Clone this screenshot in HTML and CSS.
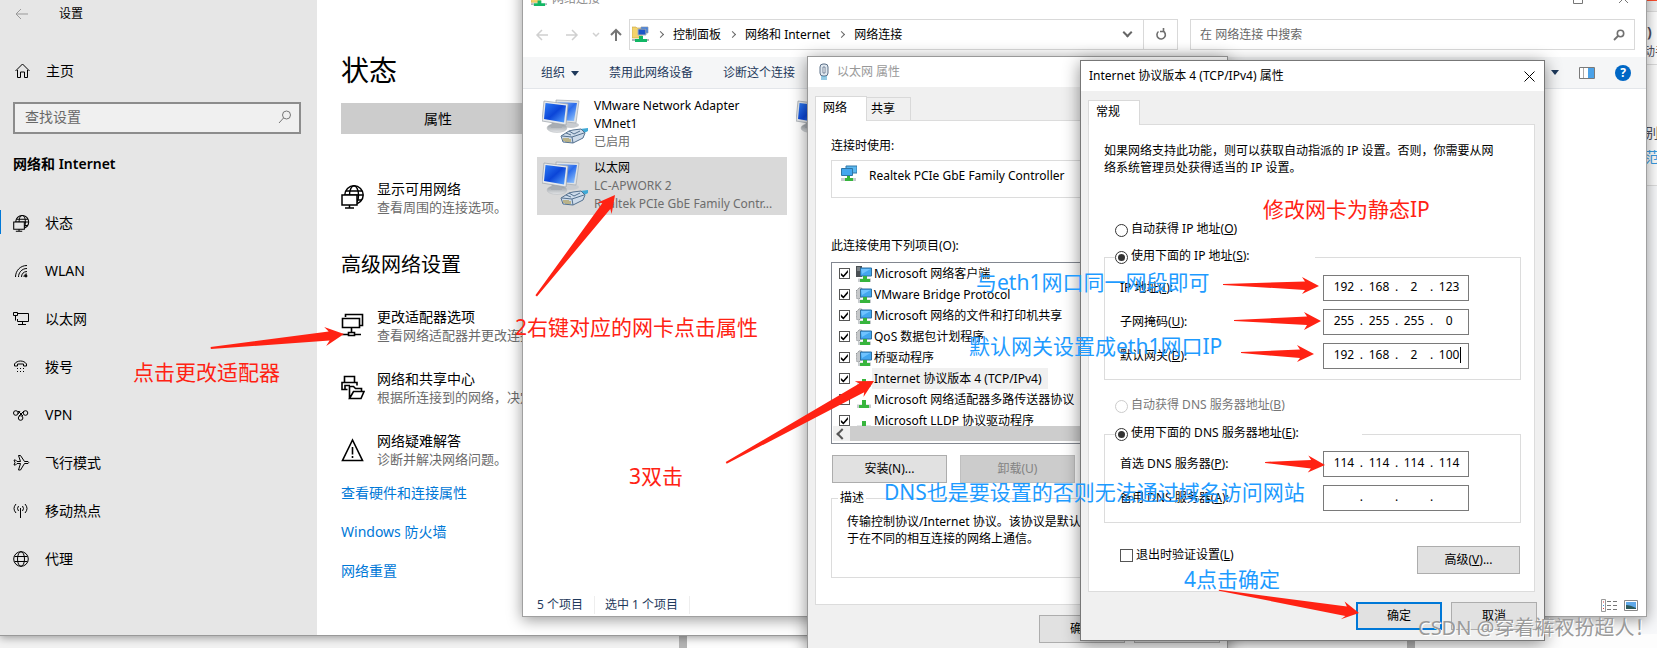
FILE: index.html
```html
<!DOCTYPE html>
<html lang="zh-CN">
<head>
<meta charset="utf-8">
<title>网络连接</title>
<link rel="stylesheet" href="styles.css">
</head>
<body>
<svg class="defs" aria-hidden="true">
  <defs>
    <linearGradient id="screen" x1="0" y1="0" x2="1" y2="1"><stop offset="0" stop-color="#2f7df5"/><stop offset=".5" stop-color="#0b45d8"/><stop offset="1" stop-color="#5aa6ff"/></linearGradient>
    <linearGradient id="screen2" x1="0" y1="0" x2="1" y2="1"><stop offset="0" stop-color="#9cc4fb"/><stop offset=".5" stop-color="#2c6cea"/><stop offset="1" stop-color="#9fd0ff"/></linearGradient>
    <linearGradient id="stand" x1="0" y1="0" x2="0" y2="1"><stop offset="0" stop-color="#8e949b"/><stop offset="1" stop-color="#e4e6e8"/></linearGradient>
    <symbol id="adapter" viewBox="0 0 46 46">
      <ellipse cx="29" cy="26" rx="8" ry="3" fill="#c9ccd0"/>
      <path d="M14 1l23 1-3 22-20-2z" fill="#dfe3e6" stroke="#a2a8ae" stroke-width=".7"/>
      <path d="M16 3l19 1-3 18-16-1z" fill="url(#screen2)"/>
      <ellipse cx="15" cy="29" rx="10" ry="4.500" fill="url(#stand)" stroke="#b5b8bc" stroke-width=".5"/>
      <path d="M10 22h9l1 7h-11z" fill="#a8adb3"/>
      <path d="M2 2l24 3-2 21L0 22z" fill="#e6e9ec" stroke="#9aa1a8" stroke-width=".7"/>
      <path d="M3.500 4l20.500 2.500-2 17L2 20z" fill="url(#screen)"/>
      <path d="M46 29l-8 1-5 4 4 3 9-5z" fill="#3fa9d6"/>
      <path d="M31 31l8-1 4 4-2 5-10 5-10-1-2-6 8-5z" fill="#cddbea" stroke="#54718f" stroke-width="1"/>
      <path d="M20 37l10 1 1 6M30 38l12-4M27 32l5 3 6-3M24 34l5 2" fill="none" stroke="#54718f" stroke-width="1"/>
      <path d="M22 39v3M24 39v4M26 39v4M28 40v3" stroke="#a58a2a" stroke-width="1"/>
    </symbol>
    <symbol id="service" viewBox="0 0 16 16">
      <path d="M0 4l2-2 2-1.500 2 1-1 9-3 2-2-2z" fill="#c6c8ca" stroke="#8d9194" stroke-dasharray="2 1"/>
      <path d="M4.500 2h11v8h-11z" fill="#43a7ef" stroke="#2f6f9f"/>
      <path d="M5 3h9.500L6 8z" fill="#6fc3ff"/>
      <path d="M2 12.500h13V16H2z" fill="#c8cccf"/><path d="M7 10h4v3h3v3H4v-3h3z" fill="#37b53d"/>
    </symbol>
    <symbol id="client" viewBox="0 0 16 16">
      <path d="M0 0h6v11H0z" fill="#4a5054"/><path d="M1 2h3M1 4h3" stroke="#a9b0b4"/>
      <path d="M4.500 2h11v8h-11z" fill="#43a7ef" stroke="#2f6f9f"/>
      <path d="M5 3h9.500L6 8z" fill="#6fc3ff"/>
      <path d="M2 12.500h13V16H2z" fill="#c8cccf"/><path d="M7 10h4v3h3v3H4v-3h3z" fill="#37b53d"/>
    </symbol>
    <symbol id="protocol" viewBox="0 0 16 16">
      <path d="M1 12.500h14V16H1z" fill="#c8cccf"/><path d="M6 8h4v5h3v3H3v-3h3z" fill="#37b53d"/>
    </symbol>
    <symbol id="netfolder" viewBox="0 0 17 17">
      <path d="M0 1h4l1 1h5v10H0z" fill="#f3d36b" stroke="#c7a23e" stroke-width=".6"/>
      <path d="M6 3h8v6H6z" fill="#1d56c8" stroke="#a8b2bd"/><path d="M9 1h7v6h-2V3H9z" fill="#3f80e6" stroke="#8d99a5" stroke-width=".7"/>
      <path d="M7 10h4v3h4v3H3v-3h4z" fill="#12b765"/><path d="M0 13h3v2H0zM15 13h2v2h-2z" fill="#aeb4ba"/>
    </symbol>
    <symbol id="netglobe" viewBox="0 0 24 24">
      <g fill="none" stroke="currentColor" stroke-width="1.500">
        <circle cx="13" cy="10" r="9.200"/><ellipse cx="13" cy="10" rx="4.500" ry="9.200"/><path d="M5 6h16M4 10h18M14 15h7"/>
        <path class="mask" d="M1 10h15v10H1z"/><path d="M8.500 20v3M4 23h9"/>
      </g>
    </symbol>
  </defs>
</svg>
<main class="desktop">
  <aside class="browser-edge">
    <div class="edge-bar"></div>
    <div class="edge-head"><b>)</b><span>动手</span></div>
    <div class="edge-body"><span>别</span><a href="#">范</a></div>
  </aside>
  <div class="taskstrip"><i></i><span></span><i></i></div>

  <section class="window settings">
    <nav class="sidebar">
      <div class="set-title"><svg width="14" height="12" viewBox="0 0 14 12" class="ln dim"><path d="M13 6H1M6 1L1 6l5 5"/></svg><span>设置</span></div>
      <a class="nav home" href="#"><svg width="17" height="16" viewBox="0 0 17 16" class="ln"><path d="M.5 8L7.500 1l7 7M2.500 7v7.500h3V9h4v5.500h3V7"/></svg>主页</a>
      <label class="set-search"><input type="text" placeholder="查找设置" aria-label="查找设置"><svg width="14" height="14" viewBox="0 0 14 14" class="ln mid"><circle cx="8.500" cy="5" r="4"/><path d="M5.500 8L1 13"/></svg></label>
      <h2 class="side-head">网络和 Internet</h2>
      <a class="nav active" href="#"><svg width="17" height="17" viewBox="0 0 24 24"><use href="#netglobe"/></svg>状态</a>
      <a class="nav" href="#"><svg width="17" height="16" viewBox="0 0 17 16" class="ln"><path d="M2.500 14C2.500 8 7 2.500 14 2.500M5.500 14c0-4 3-8.500 8.500-8.500M8.500 14c0-3 2-5.500 5.500-5.500"/><path d="M11 14c0-2 1-3 3-3"/><circle cx="13" cy="13" r="1" fill="#000"/></svg>WLAN</a>
      <a class="nav" href="#"><svg width="17" height="16" viewBox="0 0 17 16" class="ln"><path d="M5 2.500h10.500v8h-11V8M9.500 10.500V13M5 13.500h8M.5 1.500h4v3h-4zM2.500 4.500v5"/></svg>以太网</a>
      <a class="nav" href="#"><svg width="17" height="16" viewBox="0 0 17 16" class="ln"><path d="M1.500 7V5C4 1 11 1 13.500 5v2h-3V5h-6v2z"/><path d="M4 9.500h8M4 12.500h8" stroke-dasharray="1 2"/></svg>拨号</a>
      <a class="nav" href="#"><svg width="17" height="16" viewBox="0 0 17 16" class="ln"><circle cx="2.800" cy="6" r="2.300"/><circle cx="12.500" cy="6" r="2.300"/><circle cx="7.600" cy="11" r="2.300"/><path d="M5 4l5 5M11 4L6 9M5 7l2-3M8 7l3-3"/></svg>VPN</a>
      <a class="nav" href="#"><svg width="17" height="16" viewBox="0 0 17 16" class="ln"><path d="M1 5h1.500l1.500 1.500h3.500L5.500.5h2l4 6H15q1.500 1 0 2h-3.500l-4 6.500h-2l2-6.500H4L2.500 10H1l1-2.500z"/></svg>飞行模式</a>
      <a class="nav" href="#"><svg width="17" height="16" viewBox="0 0 17 16" class="ln"><path d="M7.500 5v10M3 1q-4 4.500 0 9M12 1q4 4.500 0 9M5.500 3q-2 2.500 0 5M9.500 3q2 2.500 0 5"/></svg>移动热点</a>
      <a class="nav" href="#"><svg width="17" height="17" viewBox="0 0 17 17" class="ln"><circle cx="8" cy="8" r="7.300"/><ellipse cx="8" cy="8" rx="3.500" ry="7.300"/><path d="M1.500 5.500h13M1.500 10.500h13"/></svg>代理</a>
    </nav>
    <div class="set-main">
      <h1>状态</h1>
      <button class="prop-btn" type="button">属性</button>
      <a class="opt first" href="#"><svg width="24" height="26" viewBox="0 0 24 26"><use href="#netglobe" width="24" height="24"/></svg><span><b>显示可用网络</b><small>查看周围的连接选项。</small></span></a>
      <h2>高级网络设置</h2>
      <div class="opts">
        <a class="opt" href="#"><svg width="24" height="26" viewBox="0 0 24 26" class="ln big"><path d="M4.500 4V1.500h17v11h-3M1.500 5.500h17v9h-17zM10.500 14.500v5M7.500 19.500h6v3h-6zM1 21.500h6.500M13.500 21.500H20"/></svg><span><b>更改适配器选项</b><small>查看网络适配器并更改连接设置。</small></span></a>
        <a class="opt" href="#"><svg width="24" height="26" viewBox="0 0 24 26" class="ln big"><path d="M3.500 7V1.500h10V7M6.500 14.500H1V7.500h15v3M4 14.500v-4h5"/><path d="M8.500 23.500v-12h4l2 2h6v3M8.500 23.500l4-7h10.500l-3 7z"/></svg><span><b>网络和共享中心</b><small>根据所连接到的网络，决定要共享的内容。</small></span></a>
        <a class="opt" href="#"><svg width="24" height="26" viewBox="0 0 24 26" class="ln big"><path d="M11.500 3L1.500 23.500h20zM11.500 10v7.500M11.500 19v2"/></svg><span><b>网络疑难解答</b><small>诊断并解决网络问题。</small></span></a>
      </div>
      <div class="links"><a href="#">查看硬件和连接属性</a><a href="#">Windows 防火墙</a><a href="#">网络重置</a></div>
    </div>
  </section>

  <section class="window explorer">
    <header class="ex-title"><svg width="16" height="16"><use href="#netfolder"/></svg><span>网络连接</span><svg class="ln mid caps" width="56" height="12" viewBox="0 0 56 12"><path d="M.5 1.500h9v9h-9zM46 1l9 9M55 1l-9 9"/></svg></header>
    <div class="ex-address">
      <svg width="88" height="14" viewBox="0 0 88 14" class="ln arrows"><g stroke="#d0d0d0" stroke-width="1.500"><path d="M13 7H2M7 2L2 7l5 5M31 7h11M37 2l5 5-5 5M58 5l3 3 3-3"/></g><path stroke="#757575" stroke-width="2" d="M81 13V2M76 7l5-5 5 5"/></svg>
      <div class="crumbs"><svg width="17" height="17"><use href="#netfolder"/></svg><i></i><a href="#">控制面板</a><i></i><a href="#">网络和 Internet</a><i></i><a href="#">网络连接</a><i class="down"></i></div>
      <button class="refresh" type="button" aria-label="刷新"><svg width="12" height="13" viewBox="0 0 12 13"><path d="M8 3A4.200 4.200 0 1 1 3.500 3.500M8.500 0v3.500H5" fill="none" stroke="#6d6d6d" stroke-width="1.600"/></svg></button>
      <label class="ex-search"><input type="text" placeholder="在 网络连接 中搜索" aria-label="在 网络连接 中搜索"><svg width="12" height="12" viewBox="0 0 12 12"><circle cx="7.500" cy="4.500" r="3.200" fill="none" stroke="#707070" stroke-width="1.600"/><path d="M5 7L1 11" stroke="#707070" stroke-width="1.800"/></svg></label>
    </div>
    <div class="ex-tools">
      <button type="button">组织<i class="tri"></i></button><button type="button">禁用此网络设备</button><button type="button">诊断这个连接</button>
      <span class="tools-right"><i class="tri"></i><svg width="16" height="12" viewBox="0 0 16 12"><path d="M.5.5h15v11H.5z" fill="#fff" stroke="#7a7a7a"/><path d="M4.500 1v10" stroke="#aaa"/><path d="M9 1h6v10H9z" fill="#4ba2e8"/></svg><button class="help" type="button">?</button></span>
    </div>
    <div class="ex-items">
      <div class="item"><svg width="46" height="46"><use href="#adapter"/></svg><p>VMware Network Adapter VMnet1<br><span>已启用</span></p></div>
      <div class="item third"><svg width="46" height="46"><use href="#adapter"/></svg></div>
      <div class="item selected"><svg width="46" height="46"><use href="#adapter"/></svg><p>以太网<br><span>LC-APWORK 2</span><br><span>Realtek PCIe GbE Family Contr...</span></p></div>
    </div>
    <footer class="ex-status"><span>5 个项目</span><span>选中 1 个项目</span><svg width="38" height="13" viewBox="0 0 38 13"><path d="M.5.500h4v12h-4z" fill="#fff" stroke="#999"/><path d="M2 3h1M2 9.500h1" stroke="#e03a3a"/><path d="M2 6.500h1" stroke="#3a8ee0"/><path d="M6 2.500h4m2 0h4M6 6.500h4m2 0h4M6 10.500h4m2 0h4" stroke="#777"/><path d="M23.500 1.500h13v10h-13z" fill="#fff" stroke="#888"/><path d="M25 3h10v7H25z" fill="#5fa8e8"/><path d="M25 6q4 0 10 3v1H25z" fill="#2c5a5c"/></svg></footer>
  </section>

  <section class="window dialog ethernet">
    <header class="dlg-title muted"><svg width="10" height="18" viewBox="0 0 10 18"><rect x="1" y="1" width="8" height="12" rx="3" fill="#dfe7ee" stroke="#5c7088"/><path d="M4 4h2v6H4z" fill="#fff" stroke="#5c7088" stroke-width=".8"/><path d="M3 13v4M5 13v4M7 13v4" stroke="#2b95c9"/></svg>以太网 属性</header>
    <div class="dlg-body">
      <div class="tabs"><button class="tab on" type="button">网络</button><button class="tab" type="button">共享</button></div>
      <div class="panel">
        <p class="line">连接时使用:</p>
        <div class="device"><svg width="16" height="16" viewBox="0 0 16 16"><path d="M5 1h11v7H5z" fill="#5cb8ef" stroke="#2f76a8"/><path d="M.5 3.500h11v7H.5z" fill="#43a7ef" stroke="#2f76a8"/><path d="M0 13h15v3H0z" fill="#c8cccf"/><path d="M6 11h3v2h3v3H4v-3h2z" fill="#37b53d"/></svg><span>Realtek PCIe GbE Family Controller</span></div>
        <p class="line mid-line">此连接使用下列项目(O):</p>
        <div class="list">
          <div class="rows">
            <label><input type="checkbox" checked><svg width="16" height="16"><use href="#client"/></svg><span>Microsoft 网络客户端</span></label>
            <label><input type="checkbox" checked><svg width="16" height="16"><use href="#service"/></svg><span>VMware Bridge Protocol</span></label>
            <label><input type="checkbox" checked><svg width="16" height="16"><use href="#service"/></svg><span>Microsoft 网络的文件和打印机共享</span></label>
            <label><input type="checkbox" checked><svg width="16" height="16"><use href="#service"/></svg><span>QoS 数据包计划程序</span></label>
            <label><input type="checkbox" checked><svg width="16" height="16"><use href="#service"/></svg><span>桥驱动程序</span></label>
            <label><input type="checkbox" checked><svg width="16" height="16"><use href="#protocol"/></svg><span class="hl">Internet 协议版本 4 (TCP/IPv4)</span></label>
            <label><input type="checkbox"><svg width="16" height="16"><use href="#protocol"/></svg><span>Microsoft 网络适配器多路传送器协议</span></label>
            <label><input type="checkbox" checked><svg width="16" height="16"><use href="#protocol"/></svg><span>Microsoft LLDP 协议驱动程序</span></label>
          </div>
          <div class="hscroll"><button type="button" aria-label="向左滚动"></button><span></span></div>
        </div>
        <div class="btns"><button class="btn" type="button">安装(N)...</button><button class="btn" type="button" disabled>卸载(U)</button><button class="btn" type="button" aria-label="属性"></button></div>
        <fieldset class="desc"><legend>描述</legend><p>传输控制协议/Internet 协议。该协议是默认<br>于在不同的相互连接的网络上通信。</p></fieldset>
      </div>
      <div class="dlg-foot"><button class="btn" type="button">确定</button><button class="btn" type="button" aria-label="取消"></button></div>
    </div>
  </section>

  <section class="window dialog ipv4">
    <header class="dlg-title">Internet 协议版本 4 (TCP/IPv4) 属性<button class="close" type="button" aria-label="关闭"><svg width="11" height="11" viewBox="0 0 11 11" class="ln"><path d="M.5.5l10 10M10.500.5l-10 10"/></svg></button></header>
    <div class="dlg-body">
      <div class="tabs"><button class="tab on" type="button">常规</button></div>
      <div class="panel">
        <p class="intro">如果网络支持此功能，则可以获取自动指派的 IP 设置。否则，你需要从网络系统管理员处获得适当的 IP 设置。</p>
        <label class="radio auto-ip"><input type="radio" name="ip"><span>自动获得 IP 地址(<u>O</u>)</span></label>
        <fieldset class="group"><legend><label class="radio"><input type="radio" name="ip" checked><span>使用下面的 IP 地址(<u>S</u>):</span></label></legend>
          <div class="row"><label for="ip1">IP 地址(<u>I</u>):</label><div class="ip"><input id="ip1" value="192">.<input value="168" aria-label="IP 2">.<input value="2" aria-label="IP 3">.<input value="123" aria-label="IP 4"></div></div>
          <div class="row"><label for="mask1">子网掩码(<u>U</u>):</label><div class="ip"><input id="mask1" value="255">.<input value="255" aria-label="掩码 2">.<input value="255" aria-label="掩码 3">.<input value="0" aria-label="掩码 4"></div></div>
          <div class="row"><label for="gw1">默认网关(<u>D</u>):</label><div class="ip"><input id="gw1" value="192">.<input value="168" aria-label="网关 2">.<input value="2" aria-label="网关 3">.<input class="caret" value="100" aria-label="网关 4"></div></div>
        </fieldset>
        <label class="radio auto-dns"><input type="radio" name="dns" disabled><span>自动获得 DNS 服务器地址(<u>B</u>)</span></label>
        <fieldset class="group dns"><legend><label class="radio"><input type="radio" name="dns" checked><span>使用下面的 DNS 服务器地址(<u>E</u>):</span></label></legend>
          <div class="row"><label for="dns1">首选 DNS 服务器(<u>P</u>):</label><div class="ip"><input id="dns1" value="114">.<input value="114" aria-label="首选 2">.<input value="114" aria-label="首选 3">.<input value="114" aria-label="首选 4"></div></div>
          <div class="row"><label for="alt1">备用 DNS 服务器(<u>A</u>):</label><div class="ip"><input id="alt1" value="">.<input value="" aria-label="备用 2">.<input value="" aria-label="备用 3">.<input value="" aria-label="备用 4"></div></div>
        </fieldset>
        <div class="advanced"><label><input type="checkbox"><span>退出时验证设置(<u>L</u>)</span></label><button class="btn" type="button">高级(<u>V</u>)...</button></div>
      </div>
      <div class="dlg-foot"><button class="btn primary" type="button">确定</button><button class="btn" type="button">取消</button></div>
    </div>
  </section>

  <div class="notes">
    <svg width="1657" height="648" viewBox="0 0 1657 648" fill="#ff2213">
      <path transform="translate(344 334) rotate(-6)" d="M0 0L-19-9l4 5L-134-1v2L-15 5l-4 5z"/>
      <path transform="translate(615 195) rotate(-52)" d="M0 0L-17-9l3 4L-128-1v2L-14 5l-3 4z"/>
      <path transform="translate(874 381) rotate(-29)" d="M0 0L-17-9l3 4L-169-1v2L-14 5l-3 4z"/>
      <path transform="translate(1319 286)" d="M0 0L-17-9l3 4.500L-96-2v1L-14 4l-3 4z"/>
      <path transform="translate(1321 321)" d="M0 0L-17-9l3 4.500L-87-1v1L-14 4l-3 5z"/>
      <path transform="translate(1314 354)" d="M0 0L-17-9l3 4.500L-73-2v1L-14 4l-3 4z"/>
      <path transform="translate(1325 465) rotate(2)" d="M0 0L-17-9l3 4.500L-60-1v1L-14 4l-3 4z"/>
      <path transform="translate(1359 613) rotate(9)" d="M0 0L-16-9l3 4.500L-142-1v1L-13 5l-4 4z"/>
    </svg>
    <span class="note red n1">点击更改适配器</span>
    <span class="note red n2">2右键对应的网卡点击属性</span>
    <span class="note red n3">3双击</span>
    <span class="note red n4">修改网卡为静态IP</span>
    <span class="note n5">与eth1网口同一网段即可</span>
    <span class="note n6">默认网关设置成eth1网口IP</span>
    <span class="note n7">DNS也是要设置的否则无法通过域名访问网站</span>
    <span class="note n8">4点击确定</span>
    <span class="note mark">CSDN @穿着裤衩扮超人！</span>
  </div>
</main>
</body>
</html>
```

FILE: styles.css
```css
* { box-sizing: border-box; }
body, h1, h2, p, fieldset, legend { margin: 0; padding: 0; }
body { background: #fdfdfd; color: #000; font: 12px/18px "Noto Sans", "Noto Sans CJK SC", sans-serif; overflow: hidden; }
button, input { font: inherit; color: inherit; margin: 0; }
button { padding: 0; border: 0; background: none; }
a { color: inherit; text-decoration: none; }
svg { display: block; flex: none; }
.defs { position: absolute; width: 0; height: 0; }
.ln { fill: none; stroke: #000; stroke-width: 1; }
.ln.big { stroke-width: 1.6; }
.ln.dim { stroke: #999; }
.ln.mid { stroke: #777; }
.mask { fill: var(--ground, #fff); }

.desktop { position: relative; height: 100vh; overflow: hidden; }
.window { position: absolute; background: #fff; display: flex; }

/* browser page behind the windows */
.browser-edge { position: absolute; top: 0; right: 0; bottom: 0; width: 18px; background: #f7f8fa; white-space: nowrap; overflow: hidden; color: #4d4d5c; }
.edge-bar { height: 12px; border-top: 1px solid #ff4d2d; border-bottom: 1px solid #ddd; background: #f1f1f1; }
.edge-head { height: 53px; padding: 10px 0 0 4px; background: #fff; border-bottom: 1px solid #ddd; }
.edge-head b, .edge-head span { display: block; line-height: 20px; }
.edge-head b { padding-left: 4px; font-size: 14px; }
.edge-body { height: 121px; padding: 56px 0 0 6px; background: #fdfdfd; border-bottom: 1px solid #ddd; font-size: 14px; line-height: 24px; }
.edge-body span, .edge-body a { display: block; }
.edge-body a { color: #3a9be0; }
.taskstrip { position: absolute; left: 0; right: 0; bottom: 0; height: 14px; display: flex; background: #f2f2f2; }
.taskstrip i { width: 8px; background: #b4b4b4; }
.taskstrip i:first-child { margin-left: 679px; }
.taskstrip span { width: 720px; background: #fdfdfd; }
.taskstrip::after { content: ""; flex: 1; background: #fdfdfd; }

/* settings */
.settings { left: 0; top: 0; bottom: 12px; width: 85%; border-bottom: 1px solid #999; box-shadow: 0 2px 8px rgba(0,0,0,.35); font-size: 14px; }
.sidebar { --ground: #e6e6e6; width: 317px; background: #e6e6e6; display: flex; flex-direction: column; }
.set-title { display: flex; align-items: center; gap: 30px; height: 28px; padding-left: 15px; font-size: 12px; }
.nav { display: flex; align-items: center; gap: 15px; height: 48px; padding-left: 12px; border-left: 1px solid transparent; }
.nav.home { height: 32px; margin: 27px 0 15px; padding-left: 14px; gap: 14px; }
.nav.active { border-image: linear-gradient(transparent 11px, #0078d7 11px, #0078d7 35px, transparent 35px) 0 0 0 1; }
.set-search { display: flex; align-items: center; height: 32px; margin: 0 16px 20px 13px; padding: 0 7px 2px 10px; border: 2px solid #8c8c8c; background: #f0f0f0; }
.set-search input { flex: 1; min-width: 0; padding: 0; border: 0; outline: 0; background: none; }
input::placeholder { color: #686868; opacity: 1; }
.side-head { margin: 0 0 25px 13px; font-size: 14px; line-height: 20px; font-weight: 600; }
.set-main { flex: 1; padding: 50px 0 0 24px; white-space: nowrap; }
h1 { font-size: 28px; line-height: 40px; font-weight: 400; }
.set-main h2 { margin: 35px 0 29px; font-size: 20px; line-height: 28px; font-weight: 400; }
.prop-btn { display: block; width: 194px; height: 31px; margin: 13px 0 46px; background: #ccc; }
.opt { display: flex; align-items: center; gap: 12px; line-height: 18px; }
.opt b { display: block; font-weight: 400; }
.opt small { display: block; font-size: 13px; color: #6b6b6b; }
.opts { display: grid; gap: 26px; }
.links { display: grid; gap: 19px; margin-top: 15px; line-height: 20px; color: #0078d7; }

/* explorer */
.explorer { left: 522px; right: 10px; top: -18px; bottom: 31px; flex-direction: column; border: 1px solid #a0a0a0; box-shadow: 0 3px 14px rgba(0,0,0,.4); }
.ex-title { display: flex; align-items: center; gap: 5px; height: 31px; padding: 0 17px 0 8px; color: #888; }
.ex-title .caps { margin-left: auto; }
.ex-address { display: flex; align-items: center; padding: 5px 11px 7px 12px; height: 43px; }
.arrows { margin-right: 6px; }
.crumbs { flex: 500 1 0; display: flex; align-items: center; gap: 9px; height: 31px; padding: 0 10px 0 2px; border: 1px solid #d9d9d9; white-space: nowrap; }
.crumbs i { width: 5px; height: 5px; margin-right: 1px; border: solid #666; border-width: 1px 1px 0 0; transform: rotate(45deg); }
.crumbs .down { width: 7px; height: 7px; margin: 0 2px 4px auto; border-width: 2px 2px 0 0; transform: rotate(135deg); }
.refresh { display: flex; align-items: center; justify-content: center; width: 34px; height: 31px; border: 1px solid #d9d9d9; border-left: 0; margin-right: 12px; }
.ex-search { flex: 424 1 0; display: flex; align-items: center; height: 31px; padding: 0 9px; border: 1px solid #d9d9d9; }
.ex-search input { flex: 1; min-width: 0; padding: 0; border: 0; outline: 0; }
.ex-tools { display: flex; align-items: center; gap: 30px; height: 32px; padding: 0 15px 0 18px; background: #f5f6f7; border-bottom: 1px solid #e3e6ea; color: #1e395b; }
.tri { display: inline-block; margin-left: 6px; border: 4px solid transparent; border-top: 5px solid #1e395b; border-bottom: 0; vertical-align: 1px; }
.tools-right { display: flex; align-items: center; gap: 20px; margin-left: auto; }
.help { width: 16px; height: 16px; border-radius: 8px; background: #0067c5; color: #fff; font-weight: 700; line-height: 16px; }
.ex-items { flex: 1; display: grid; grid-template-columns: 250px 250px; grid-auto-rows: 58px; gap: 4px; padding: 6px 14px; }
.item { display: flex; gap: 6px; padding: 2px 5px; }
.item svg { margin-top: 2px; }
.item span { color: #6d6d6d; }
.selected { background: #d9d9d9; }
.ex-status { display: flex; align-items: center; height: 22px; padding: 0 7px 0 14px; color: #1e395b; }
.ex-status span { padding-right: 11px; margin-right: 10px; border-right: 1px solid #eee; }
.ex-status svg { margin-left: auto; }

/* property dialogs */
.dialog { flex-direction: column; background: #f0f0f0; border: 1px solid #777; box-shadow: 0 3px 16px rgba(0,0,0,.45); }
.dlg-title { display: flex; align-items: center; height: 30px; padding-left: 8px; background: #fff; }
.muted { gap: 8px; padding-left: 11px; color: #999; }
.close { margin: 0 9px 0 auto; }
.dlg-body { padding: 9px 7px 10px; }
.tabs { display: flex; align-items: flex-end; }
.tab { height: 23px; padding: 0 15px 0 4px; background: #f0f0f0; border: 1px solid #d9d9d9; border-left: 0; border-bottom: 0; }
.tab.on { height: 25px; margin-bottom: -1px; padding: 0 19px 2px 7px; border-left: 1px solid #d9d9d9; background: #fff; }
.panel { padding: 16px 15px 0; background: #fff; border: 1px solid #dcdcdc; }
.btn { height: 28px; background: #e1e1e1; border: 1px solid #adadad; }
.btn:disabled { background: #ccc; border-color: #bfbfbf; color: #838383; }
.dlg-foot { display: flex; justify-content: flex-end; gap: 9px; padding-top: 10px; }
.dlg-foot .btn { width: 86px; }
fieldset { min-width: 0; border: 1px solid #dcdcdc; }

.ethernet { left: 807px; top: 56px; width: 421px; border-color: #999; }
.ethernet .panel { padding-bottom: 26px; }
.device { display: flex; gap: 12px; height: 38px; margin-top: 5px; padding: 4px 9px; border: 1px solid #dcdcdc; line-height: 22px; }
.mid-line { margin-top: 39px; }
.list { margin-top: 7px; padding: 0 1px 2px; border: 1px solid #828790; }
.rows { height: 163px; overflow: hidden; }
.rows label { display: flex; align-items: center; height: 21px; padding-left: 6px; }
.rows svg { margin: 0 0 0 6px; }
.rows span { line-height: 21px; padding: 0 6px 0 2px; white-space: nowrap; }
.rows .hl { background: #f0f0f0; }
input[type="checkbox"] { appearance: none; width: 11px; height: 11px; border: 1px solid #555; background: #fff; }
input[type="checkbox"]:checked::before { content: ""; display: block; width: 9px; height: 9px; background: #000; clip-path: polygon(10% 45%, 38% 70%, 88% 12%, 88% 38%, 38% 95%, 10% 70%); }
.hscroll { display: flex; height: 15px; background: #cdcdcd; }
.hscroll button { display: flex; align-items: center; justify-content: center; width: 17px; background: #f0f0f0; }
.hscroll button::before { content: ""; width: 6px; height: 6px; border: solid #555; border-width: 0 0 2px 2px; transform: rotate(45deg); }
.btns { display: flex; gap: 13px; margin-top: 11px; padding: 0 1px; }
.btns .btn { flex: 1; }
.desc { margin-top: 6px; height: 89px; }
.desc legend { margin-left: 6px; padding: 0 2px; }
.desc p { padding: 6px 15px; line-height: 17px; white-space: nowrap; }

.ipv4 { left: 1080px; top: 60px; width: 465px; }
.ipv4 .panel { margin-right: 2px; padding: 17px 13px 17px 15px; }
.intro { line-height: 17px; padding-right: 20px; }
.radio { display: flex; align-items: center; gap: 3px; height: 20px; }
.radio span { margin-top: -3px; }
input[type="radio"] { appearance: none; display: grid; place-items: center; width: 13px; height: 13px; border: 1px solid #333; border-radius: 50%; background: #fff; }
input[type="radio"]:checked::before { content: ""; width: 7px; height: 7px; border-radius: 50%; background: #333; }
input[type="radio"]:disabled { border-color: #ccc; }
input[type="radio"]:disabled + span { color: #777; }
.auto-ip { margin: 44px 0 7px 11px; }
.auto-dns { margin: 16px 0 8px 11px; }
.group { display: grid; padding: 0 51px 10px 15px; }
.group legend { width: 200px; margin-left: -5px; }
.dns legend { width: 247px; }
.row { display: flex; align-items: center; justify-content: space-between; margin-top: 8px; height: 26px; }
.dns .row { margin: 7px 0 1px; }
.ip { display: flex; align-items: center; width: 146px; height: 26px; padding: 0 3px 2px 4px; border: 1px solid #7a7a7a; }
.ip input { flex: 1 1 0; width: 0; min-width: 0; padding: 0; border: 0; outline: 0; text-align: center; background: none; }
.ip .caret { background: linear-gradient(#000, #000) 27px 50% / 1px 16px no-repeat; }
.advanced { display: flex; justify-content: space-between; align-items: flex-start; margin-top: 23px; padding-left: 16px; }
.advanced label { display: flex; align-items: center; gap: 3px; }
.advanced input[type="checkbox"] { width: 13px; height: 13px; }
.advanced .btn { width: 103px; margin-right: 1px; }
.btn.primary { border: 2px solid #0078d7; }

/* annotations laid over the windows */
.notes { position: absolute; inset: 0; pointer-events: none; }
.note { position: absolute; font-size: 21px; line-height: 30px; white-space: nowrap; color: #1e9bff; }
.note.red { color: #ff2213; }
.n1 { left: 133px; top: 357px; }
.n2 { left: 515px; top: 312px; }
.n3 { left: 629px; top: 461px; }
.n4 { left: 1263px; top: 194px; }
.n5 { left: 976px; top: 267px; }
.n6 { left: 969px; top: 331px; }
.n7 { left: 884px; top: 477px; }
.n8 { left: 1184px; top: 564px; }
.note.mark { left: 1418px; top: 613px; font-size: 20px; color: #9a9a9a; text-shadow: 1px 1px 0 #fff; }
```
